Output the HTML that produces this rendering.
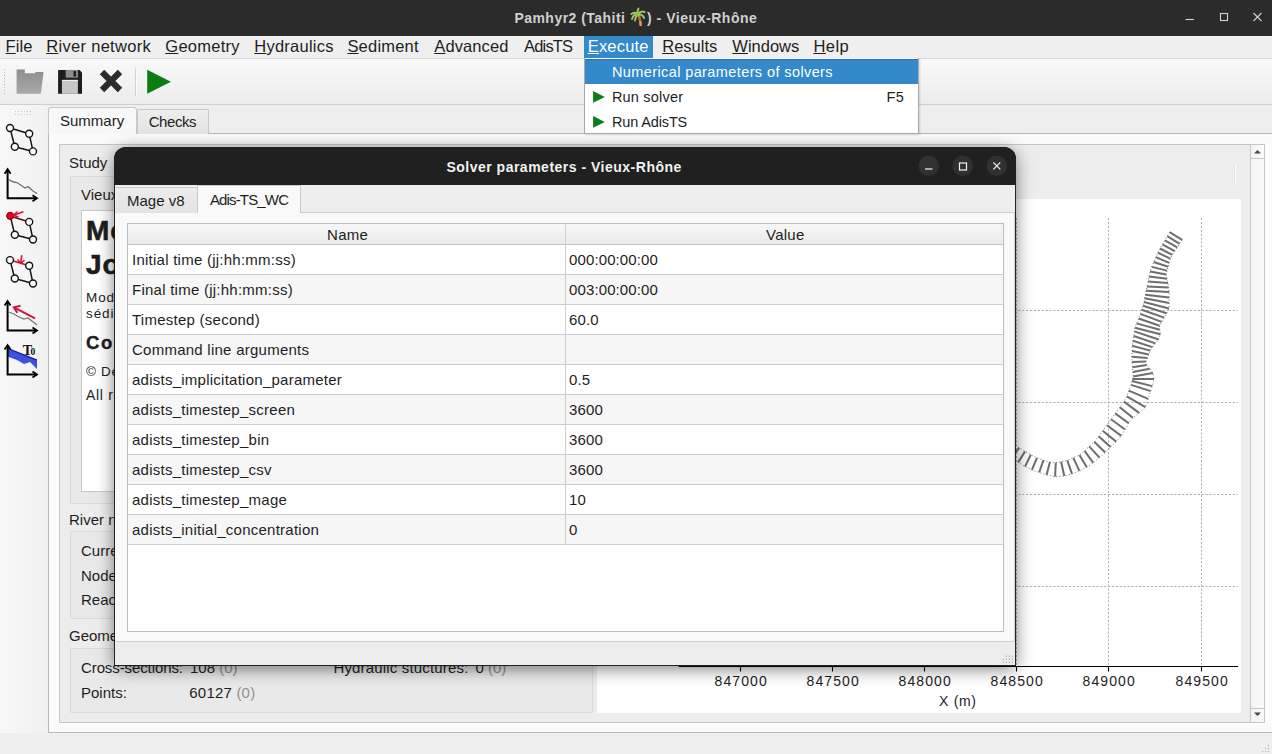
<!DOCTYPE html>
<html><head><meta charset="utf-8">
<style>
*{box-sizing:border-box;margin:0;padding:0}
html,body{width:1272px;height:754px;overflow:hidden;background:#efefef;font-family:"Liberation Sans",sans-serif;color:#1e1e1e}
.a{position:absolute}
.t{position:absolute;white-space:nowrap;font-size:15px;line-height:18px}
.ul{text-decoration:underline;text-underline-offset:1.2px}
svg{position:absolute;overflow:visible}
</style></head>
<body>
<!-- ===== MAIN TITLE BAR ===== -->
<div class="a" style="left:0;top:0;width:1272px;height:35.6px;background:#2b2b2b"></div>
<div class="t" style="left:514.4px;top:8.5px;font-size:14px;font-weight:bold;color:#d0d0d0;letter-spacing:0.47px">Pamhyr2 (Tahiti</div>
<div class="t" style="left:647px;top:8.5px;font-size:14px;font-weight:bold;color:#d0d0d0;letter-spacing:0.53px">) - Vieux-Rhône</div>
<svg style="left:628px;top:6px" width="20" height="22"><path d="M10.8 9.5 Q12.3 14 12.6 19" stroke="#b07035" stroke-width="2.6" fill="none" stroke-linecap="round"/><path d="M12.4 16 Q12.6 17.5 12.6 19" stroke="#e0a070" stroke-width="2" fill="none" stroke-linecap="round"/><g stroke="#a2c46c" stroke-width="2" fill="none" stroke-linecap="round"><path d="M9.8 8 Q6 5.5 3.5 8"/><path d="M9.8 8 Q5.5 8 4 13"/><path d="M9.8 8 Q7.5 10 7 14.5"/><path d="M9.8 8 Q13 4.5 16.5 6"/><path d="M9.8 8 Q14.5 8 16 12"/><path d="M9.8 8 Q9 4.5 10.5 2.5"/></g><circle cx="10" cy="8.5" r="2.2" fill="#8cc640"/></svg>
<svg style="left:0;top:0" width="1272" height="35">
  <g stroke="#d4d4d4" stroke-width="1.1" fill="none">
    <line x1="1185.5" y1="19.5" x2="1194" y2="19.5"/>
    <rect x="1220.5" y="13.5" width="7" height="7"/>
    <line x1="1253.5" y1="13" x2="1261.5" y2="21"/><line x1="1261.5" y1="13" x2="1253.5" y2="21"/>
  </g>
</svg>

<!-- ===== MENU BAR ===== -->
<div class="a" style="left:0;top:35.6px;width:1272px;height:23.4px;background:linear-gradient(#f6f6f6 0,#efefef 2px);border-bottom:1px solid #d9d9d9"></div>
<div class="a" style="left:584px;top:36px;width:69px;height:22.5px;background:#3389c9"></div>

<!-- menubar text -->
<div class="t" style="left:5.6px;top:37px;font-size:16.5px;letter-spacing:0.07px;color:#1e1e1e"><span class="ul">F</span>ile</div>
<div class="t" style="left:46.2px;top:37px;font-size:16.5px;letter-spacing:0.31px;color:#1e1e1e"><span class="ul">R</span>iver network</div>
<div class="t" style="left:165.3px;top:37px;font-size:16.5px;letter-spacing:0.26px;color:#1e1e1e"><span class="ul">G</span>eometry</div>
<div class="t" style="left:254.3px;top:37px;font-size:16.5px;letter-spacing:0.23px;color:#1e1e1e"><span class="ul">H</span>ydraulics</div>
<div class="t" style="left:347.4px;top:37px;font-size:16.5px;letter-spacing:0.21px;color:#1e1e1e"><span class="ul">S</span>ediment</div>
<div class="t" style="left:434.3px;top:37px;font-size:16.5px;letter-spacing:0.09px;color:#1e1e1e"><span class="ul">A</span>dvanced</div>
<div class="t" style="left:524.0px;top:37px;font-size:16.5px;letter-spacing:-0.82px;color:#1e1e1e">AdisTS</div>
<div class="t" style="left:587.7px;top:37px;font-size:16.5px;letter-spacing:0.2px;color:#ffffff"><span class="ul">E</span>xecute</div>
<div class="t" style="left:662.2px;top:37px;font-size:16.5px;letter-spacing:0.02px;color:#1e1e1e"><span class="ul">R</span>esults</div>
<div class="t" style="left:732.3px;top:37px;font-size:16.5px;letter-spacing:0.0px;color:#1e1e1e"><span class="ul">W</span>indows</div>
<div class="t" style="left:813.4px;top:37px;font-size:16.5px;letter-spacing:0.45px;color:#1e1e1e"><span class="ul">H</span>elp</div>
<!-- ===== TOOLBAR ===== -->
<div class="a" style="left:0;top:59px;width:1272px;height:45.5px;background:linear-gradient(#f9f9f9,#ececec);border-bottom:1px solid #cfcfcf"></div>

<!-- toolbar icons -->
<div class="a" style="left:3px;top:68px;width:3px;height:28px;background-image:radial-gradient(circle,#b8b8b8 0.6px,transparent 0.9px);background-size:3px 3px"></div>
<svg style="left:0;top:59px" width="200" height="46">
 <defs><linearGradient id="fg" x1="0" y1="0" x2="0" y2="1"><stop offset="0" stop-color="#8e8e8e"/><stop offset="1" stop-color="#a9a9a9"/></linearGradient></defs>
 <path d="M16.6 10.5 H24.8 V14.3 H35 L35.5 13 H43.6 L40.8 34.8 H16.6 Z" fill="url(#fg)"/>
 <path d="M58.1 10.9 H79.5 L82 13.5 V34.8 H58.1 Z" fill="#1d1d1d"/>
 <rect x="65.7" y="10.9" width="12.2" height="7.8" fill="#8c8c8c"/>
 <rect x="73.5" y="12.1" width="2.5" height="5.4" fill="#1d1d1d"/>
 <rect x="61.9" y="20.9" width="16" height="13.9" fill="#c6c6c6"/>
 <rect x="61.9" y="20.9" width="16" height="1" fill="#f4f4f4"/>
 <path d="M102 13 L120 31 M120 13 L102 31" stroke="#2b2b2b" stroke-width="6.2" stroke-linecap="butt"/>
 <rect x="135" y="9.4" width="1" height="27.6" fill="#d2d2d2"/>
 <rect x="136" y="9.4" width="1" height="27.6" fill="#fbfbfb"/>
 <path d="M147.2 10.8 L170.9 22.8 L147.2 34.8 Z" fill="#0b7d12"/>
</svg>
<!-- ===== LEFT TOOLBAR ===== -->
<div class="a" style="left:0;top:105px;width:47px;height:628px;background:linear-gradient(90deg,#f8f8f8,#f1f1f1)"></div>

<svg style="left:0;top:0" width="48" height="400"><rect x="15" y="111" width="16" height="4" fill="url(#dots)"/><defs><pattern id="dots" width="3" height="3" patternUnits="userSpaceOnUse"><rect x="0" y="0" width="1" height="1" fill="#c4c4c4"/></pattern></defs><line x1="10" y1="128" x2="29.2" y2="133.8" stroke="#151515" stroke-width="1.5"/><line x1="10" y1="128" x2="14.8" y2="146.7" stroke="#151515" stroke-width="1.5"/><line x1="29.2" y1="133.8" x2="33" y2="151.4" stroke="#151515" stroke-width="1.5"/><line x1="14.8" y1="146.7" x2="33" y2="151.4" stroke="#151515" stroke-width="1.5"/><circle cx="10" cy="128" r="3.5" fill="#fafafa" stroke="#151515" stroke-width="1.4"/><circle cx="29.2" cy="133.8" r="3.5" fill="#fafafa" stroke="#151515" stroke-width="1.4"/><circle cx="14.8" cy="146.7" r="3.5" fill="#fafafa" stroke="#151515" stroke-width="1.4"/><circle cx="33" cy="151.4" r="3.5" fill="#fafafa" stroke="#151515" stroke-width="1.4"/><path d="M7.6 170.2 V198.2 H36" stroke="#000" stroke-width="2" fill="none"/><path d="M4.6 173.7 L7.6 169.2 L10.6 173.7" stroke="#000" stroke-width="1.8" fill="none"/><path d="M32.5 195.2 L37 198.2 L32.5 201.2" stroke="#000" stroke-width="1.8" fill="none"/><path d="M8 179.2 L13.5 182 L17 182.5 L22 186 L25 188 L28 186.5 L33 191 L37 193.5" stroke="#707070" stroke-width="1.3" fill="none"/><line x1="10.2" y1="215.9" x2="29.2" y2="221.9" stroke="#5a1010" stroke-width="1.6"/><line x1="10.2" y1="215.9" x2="14.8" y2="234.8" stroke="#151515" stroke-width="1.5"/><line x1="29.2" y1="221.9" x2="33" y2="239.5" stroke="#151515" stroke-width="1.5"/><line x1="14.8" y1="234.8" x2="33" y2="239.5" stroke="#151515" stroke-width="1.5"/><circle cx="10.2" cy="215.9" r="3.6" fill="#e0001a" stroke="#8a0010" stroke-width="1"/><circle cx="29.2" cy="221.9" r="3.5" fill="#fafafa" stroke="#151515" stroke-width="1.4"/><circle cx="14.8" cy="234.8" r="3.5" fill="#fafafa" stroke="#151515" stroke-width="1.4"/><circle cx="33" cy="239.5" r="3.5" fill="#fafafa" stroke="#151515" stroke-width="1.4"/><path d="M23.4 211.7 L14 215" stroke="#e0103a" stroke-width="1.6"/><path d="M17.5 211.5 L13.5 215.2 L18.5 217" stroke="#e0103a" stroke-width="1.5" fill="none"/><line x1="10" y1="260.1" x2="29.2" y2="265.7" stroke="#c0102a" stroke-width="1.6"/><line x1="10" y1="260.1" x2="14.8" y2="278.5" stroke="#151515" stroke-width="1.5"/><line x1="29.2" y1="265.7" x2="33" y2="283.5" stroke="#151515" stroke-width="1.5"/><line x1="14.8" y1="278.5" x2="33" y2="283.5" stroke="#151515" stroke-width="1.5"/><circle cx="10" cy="260.1" r="3.5" fill="#fafafa" stroke="#151515" stroke-width="1.4"/><circle cx="29.2" cy="265.7" r="3.5" fill="#fafafa" stroke="#151515" stroke-width="1.4"/><circle cx="14.8" cy="278.5" r="3.5" fill="#fafafa" stroke="#151515" stroke-width="1.4"/><circle cx="33" cy="283.5" r="3.5" fill="#fafafa" stroke="#151515" stroke-width="1.4"/><path d="M21.7 255.1 L20.8 262.9" stroke="#e0103a" stroke-width="1.6"/><path d="M17.5 259.5 L20.8 263.2 L24.5 260" stroke="#e0103a" stroke-width="1.5" fill="none"/><path d="M7.6 302.1 V330.6 H36" stroke="#000" stroke-width="2" fill="none"/><path d="M4.6 305.6 L7.6 301.1 L10.6 305.6" stroke="#000" stroke-width="1.8" fill="none"/><path d="M32.5 327.6 L37 330.6 L32.5 333.6" stroke="#000" stroke-width="1.8" fill="none"/><path d="M8 311.7 L14 314 L18 316.5 L24 319 L28 318 L37 325" stroke="#777" stroke-width="1.2" fill="none"/><path d="M35 318.4 L14.5 307.6" stroke="#c8163e" stroke-width="2"/><path d="M20.5 305.8 L13.8 307.3 L17.3 312.8" stroke="#c8163e" stroke-width="2" fill="none"/><path d="M8 348.5 L37 360.1 L37 369 L30 362 L24 364 L17 360 L8 356.8Z" fill="#3a52de"/><path d="M8 348.5 L37 360.1" stroke="#1c1c90" stroke-width="1.3"/><path d="M7.6 346.1 V374.6 H36" stroke="#000" stroke-width="2" fill="none"/><path d="M4.6 349.6 L7.6 345.1 L10.6 349.6" stroke="#000" stroke-width="1.8" fill="none"/><path d="M32.5 371.6 L37 374.6 L32.5 377.6" stroke="#000" stroke-width="1.8" fill="none"/><text x="22.8" y="355" font-family="Liberation Serif" font-weight="bold" font-size="14" fill="#111">T</text><text x="30.6" y="355" font-family="Liberation Serif" font-weight="bold" font-size="9.5" fill="#111">0</text></svg>
<!-- ===== TAB WIDGET ===== -->
<div class="a" style="left:47.5px;top:133px;width:1230px;height:599.5px;background:#fbfbfb;border:1px solid #b9b9b9"></div>
<div class="a" style="left:137px;top:108.5px;width:72px;height:25px;background:linear-gradient(#ededed,#e4e4e4);border:1px solid #c9c9c9;border-bottom:none;border-radius:2px 2px 0 0"></div>
<div class="a" style="left:48px;top:106.5px;width:89px;height:27.5px;background:#f8f8f8;border:1px solid #c9c9c9;border-bottom:none;border-radius:3px 3px 0 0"></div>
<div class="t" style="left:60px;top:112px">Summary</div>
<div class="t" style="left:148.7px;top:112.7px;letter-spacing:-0.44px">Checks</div>

<!-- scroll area frame -->
<div class="a" style="left:59px;top:144px;width:1206px;height:579px;background:#ededed;border:1px solid #c6c6c6"></div>

<!-- Study group -->
<div class="t" style="left:69px;top:154px">Study</div>
<div class="a" style="left:70px;top:176px;width:523px;height:328px;background:#e9e9e9;border:1px solid #d9d9d9;border-radius:2px"></div>
<div class="t" style="left:81px;top:186px">Vieux-Rhône</div>
<div class="a" style="left:81px;top:209.5px;width:500px;height:282px;background:#fff;border:1px solid #c8c8c8"></div>
<div class="t" style="left:86px;top:215.3px;font-size:28px;line-height:32px;font-weight:bold;letter-spacing:1px;-webkit-text-stroke:0.6px #1e1e1e">Modèle</div>
<div class="t" style="left:86px;top:248.8px;font-size:28px;line-height:32px;font-weight:bold;letter-spacing:1px;-webkit-text-stroke:0.6px #1e1e1e">Jonage</div>
<div class="t" style="left:86px;top:290px;font-size:13.5px;line-height:16px;letter-spacing:0.9px">Modèle de</div>
<div class="t" style="left:86px;top:306px;font-size:13.5px;line-height:16px;letter-spacing:0.9px">sédiments</div>
<div class="t" style="left:86px;top:332.5px;font-size:18.5px;line-height:20px;font-weight:bold;letter-spacing:1.6px;-webkit-text-stroke:0.4px #1e1e1e">Copyright</div>
<div class="t" style="left:86px;top:363.5px;font-size:13.5px;line-height:16px;letter-spacing:0.7px">© Dev</div>
<div class="t" style="left:86px;top:387px;font-size:14px;line-height:16px;letter-spacing:0.7px">All rights</div>

<!-- River network group -->
<div class="t" style="left:69px;top:511px">River network</div>
<div class="a" style="left:70px;top:531px;width:523px;height:88px;background:#e9e9e9;border:1px solid #d9d9d9;border-radius:2px"></div>
<div class="t" style="left:81px;top:542px">Current reach:</div>
<div class="t" style="left:81px;top:567px">Nodes:</div>
<div class="t" style="left:81px;top:591px">Reaches:</div>

<!-- Geometry group -->
<div class="t" style="left:69px;top:626.8px">Geometry</div>
<div class="a" style="left:70px;top:647.5px;width:523px;height:65px;background:#e9e9e9;border:1px solid #d9d9d9;border-radius:2px"></div>
<div class="t" style="left:81px;top:659.3px;letter-spacing:-0.1px">Cross-sections:</div>
<div class="t" style="left:190px;top:659.3px">108 <span style="color:#8f8f8f">(0)</span></div>
<div class="t" style="left:333.4px;top:659.3px;letter-spacing:0.17px">Hydraulic stuctures:</div>
<div class="t" style="left:475.5px;top:659.3px">0 <span style="color:#8f8f8f">(0)</span></div>
<div class="t" style="left:81px;top:684px">Points:</div>
<div class="t" style="left:189.3px;top:684px;letter-spacing:0.2px">60127 <span style="color:#8f8f8f">(0)</span></div>

<!-- plot toolbar area + plot -->
<div class="a" style="left:1233.5px;top:163px;width:1px;height:21px;background:#e2e2e2"></div><div class="a" style="left:1234.5px;top:163px;width:1px;height:21px;background:#fcfcfc"></div>
<div class="a" style="left:597px;top:198.5px;width:644px;height:514px;background:#fff"></div>

<!-- scrollbar -->
<div class="a" style="left:1250px;top:144px;width:15px;height:579px;background:linear-gradient(90deg,#f4f4f4,#fafafa);border:1px solid #c6c6c6"></div>
<div class="a" style="left:1250px;top:144px;width:15px;height:15px;border:1px solid #c6c6c6"></div>
<div class="a" style="left:1250px;top:708px;width:15px;height:15px;border:1px solid #c6c6c6"></div>
<svg style="left:1250px;top:144px" width="15" height="579"><path d="M4 9.5 L7.5 6 L11 9.5Z" fill="#454545"/><path d="M4 568.5 L7.5 572 L11 568.5Z" fill="#454545"/></svg>

<svg style="left:0;top:0" width="1" height="1"><g fill="#b4b4b4"><rect x="1267.9" y="744.9" width="1.2" height="1.2"/><rect x="1264.9" y="747.9" width="1.2" height="1.2"/><rect x="1267.9" y="747.9" width="1.2" height="1.2"/><rect x="1261.9" y="750.9" width="1.2" height="1.2"/><rect x="1264.9" y="750.9" width="1.2" height="1.2"/><rect x="1267.9" y="750.9" width="1.2" height="1.2"/></g></svg>
<!--PLOTSTART-->
<svg style="left:0;top:0" width="1272" height="754">
<g stroke="#b0b0b0" stroke-width="1" stroke-dasharray="2.2 1.7" fill="none">
<line x1="740.5" y1="218" x2="740.5" y2="666"/>
<line x1="832.5" y1="218" x2="832.5" y2="666"/>
<line x1="924.5" y1="218" x2="924.5" y2="666"/>
<line x1="1016.5" y1="218" x2="1016.5" y2="666"/>
<line x1="1108.5" y1="218" x2="1108.5" y2="666"/>
<line x1="1201.5" y1="218" x2="1201.5" y2="666"/>
<line x1="679" y1="310.5" x2="1238" y2="310.5"/>
<line x1="679" y1="402.5" x2="1238" y2="402.5"/>
<line x1="679" y1="494.5" x2="1238" y2="494.5"/>
<line x1="679" y1="586.5" x2="1238" y2="586.5"/>
</g>
<line x1="678.6" y1="666.5" x2="1238" y2="666.5" stroke="#000" stroke-width="1.2"/>
<line x1="740.5" y1="666.5" x2="740.5" y2="671.5" stroke="#000" stroke-width="1.1"/>
<line x1="832.5" y1="666.5" x2="832.5" y2="671.5" stroke="#000" stroke-width="1.1"/>
<line x1="924.5" y1="666.5" x2="924.5" y2="671.5" stroke="#000" stroke-width="1.1"/>
<line x1="1016.5" y1="666.5" x2="1016.5" y2="671.5" stroke="#000" stroke-width="1.1"/>
<line x1="1108.5" y1="666.5" x2="1108.5" y2="671.5" stroke="#000" stroke-width="1.1"/>
<line x1="1201.5" y1="666.5" x2="1201.5" y2="671.5" stroke="#000" stroke-width="1.1"/>
</svg>
<svg style="left:0;top:0" width="1272" height="754">
<polyline points="1169.6,232.1 1167.3,236.1 1164.9,240.3 1162.4,244.4 1160.0,248.5 1157.8,252.7 1155.8,257.2 1153.7,262.0 1151.7,266.9 1150.0,271.6 1149.0,276.6 1148.0,281.6 1147.0,286.4 1146.1,290.8 1145.3,294.7 1144.6,298.3 1144.0,302.0 1143.0,305.7 1141.7,309.7 1140.3,313.9 1138.6,318.5 1136.6,323.4 1134.9,327.8 1134.3,331.4 1133.7,336.0 1132.9,340.7 1132.2,345.7 1132.0,351.1 1131.8,356.7 1131.9,362.0 1132.4,367.3 1132.9,372.1 1133.2,376.4 1132.4,379.1 1131.9,381.0 1131.1,384.9 1128.8,390.7 1126.8,396.4 1123.9,401.6 1119.8,407.2 1115.2,413.4 1111.0,419.3 1107.0,425.2 1102.7,430.7 1098.6,436.2 1094.3,441.8 1089.2,446.3 1084.6,450.8 1079.4,455.0 1073.3,457.8 1067.3,460.3 1061.1,461.8 1055.8,462.5 1049.9,462.1 1043.5,460.1 1036.9,457.9 1030.8,454.7 1025.0,451.4 1019.1,447.7 1013.6,443.2 1008.1,438.6" fill="none" stroke="#777" stroke-width="1" stroke-dasharray="1 2.2"/>
<polyline points="1182.2,239.9 1179.6,243.8 1177.2,247.4 1174.7,251.2 1172.3,254.8 1170.4,258.7 1169.2,262.8 1168.2,266.7 1167.0,270.6 1166.3,274.6 1167.1,278.8 1167.9,283.0 1168.7,287.4 1169.1,292.1 1169.2,297.4 1169.1,303.0 1168.9,308.5 1166.6,313.3 1164.2,317.6 1161.7,321.9 1159.6,325.7 1159.8,329.7 1160.4,334.3 1158.6,339.5 1155.4,343.4 1152.5,347.1 1150.1,350.6 1148.8,354.5 1147.5,357.9 1146.0,361.5 1146.7,365.1 1149.7,368.7 1152.9,372.9 1154.0,379.0 1152.3,386.1 1150.7,391.1 1148.2,398.9 1145.3,407.1 1139.1,412.9 1132.9,417.8 1128.7,423.3 1125.1,429.5 1121.3,435.9 1116.2,441.6 1110.6,447.1 1105.2,452.5 1099.5,457.7 1093.2,462.8 1086.8,467.3 1079.4,470.8 1072.0,473.9 1064.3,476.0 1055.1,476.6 1046.6,474.9 1039.2,472.4 1031.9,469.9 1025.0,466.6 1018.2,462.4 1011.7,458.4 1005.7,453.9 999.7,449.4" fill="none" stroke="#777" stroke-width="1" stroke-dasharray="1 2.2"/>
<g stroke="#6e6e6e" stroke-width="2" stroke-linecap="butt">
<line x1="1169.6" y1="232.1" x2="1182.2" y2="239.9"/>
<line x1="1167.3" y1="236.1" x2="1179.6" y2="243.8"/>
<line x1="1164.9" y1="240.3" x2="1177.2" y2="247.4"/>
<line x1="1162.4" y1="244.4" x2="1174.7" y2="251.2"/>
<line x1="1160.0" y1="248.5" x2="1172.3" y2="254.8"/>
<line x1="1157.8" y1="252.7" x2="1170.4" y2="258.7"/>
<line x1="1155.8" y1="257.2" x2="1169.2" y2="262.8"/>
<line x1="1153.7" y1="262.0" x2="1168.2" y2="266.7"/>
<line x1="1151.7" y1="266.9" x2="1167.0" y2="270.6"/>
<line x1="1150.0" y1="271.6" x2="1166.3" y2="274.6"/>
<line x1="1149.0" y1="276.6" x2="1167.1" y2="278.8"/>
<line x1="1148.0" y1="281.6" x2="1167.9" y2="283.0"/>
<line x1="1147.0" y1="286.4" x2="1168.7" y2="287.4"/>
<line x1="1146.1" y1="290.8" x2="1169.1" y2="292.1"/>
<line x1="1145.3" y1="294.7" x2="1169.2" y2="297.4"/>
<line x1="1144.6" y1="298.3" x2="1169.1" y2="303.0"/>
<line x1="1144.0" y1="302.0" x2="1168.9" y2="308.5"/>
<line x1="1143.0" y1="305.7" x2="1166.6" y2="313.3"/>
<line x1="1141.7" y1="309.7" x2="1164.2" y2="317.6"/>
<line x1="1140.3" y1="313.9" x2="1161.7" y2="321.9"/>
<line x1="1138.6" y1="318.5" x2="1159.6" y2="325.7"/>
<line x1="1136.6" y1="323.4" x2="1159.8" y2="329.7"/>
<line x1="1134.9" y1="327.8" x2="1160.4" y2="334.3"/>
<line x1="1134.3" y1="331.4" x2="1158.6" y2="339.5"/>
<line x1="1133.7" y1="336.0" x2="1155.4" y2="343.4"/>
<line x1="1132.9" y1="340.7" x2="1152.5" y2="347.1"/>
<line x1="1132.2" y1="345.7" x2="1150.1" y2="350.6"/>
<line x1="1132.0" y1="351.1" x2="1148.8" y2="354.5"/>
<line x1="1131.8" y1="356.7" x2="1147.5" y2="357.9"/>
<line x1="1131.9" y1="362.0" x2="1146.0" y2="361.5"/>
<line x1="1132.4" y1="367.3" x2="1146.7" y2="365.1"/>
<line x1="1132.9" y1="372.1" x2="1149.7" y2="368.7"/>
<line x1="1133.2" y1="376.4" x2="1152.9" y2="372.9"/>
<line x1="1132.4" y1="379.1" x2="1154.0" y2="379.0"/>
<line x1="1131.9" y1="381.0" x2="1152.3" y2="386.1"/>
<line x1="1131.1" y1="384.9" x2="1150.7" y2="391.1"/>
<line x1="1128.8" y1="390.7" x2="1148.2" y2="398.9"/>
<line x1="1126.8" y1="396.4" x2="1145.3" y2="407.1"/>
<line x1="1123.9" y1="401.6" x2="1139.1" y2="412.9"/>
<line x1="1119.8" y1="407.2" x2="1132.9" y2="417.8"/>
<line x1="1115.2" y1="413.4" x2="1128.7" y2="423.3"/>
<line x1="1111.0" y1="419.3" x2="1125.1" y2="429.5"/>
<line x1="1107.0" y1="425.2" x2="1121.3" y2="435.9"/>
<line x1="1102.7" y1="430.7" x2="1116.2" y2="441.6"/>
<line x1="1098.6" y1="436.2" x2="1110.6" y2="447.1"/>
<line x1="1094.3" y1="441.8" x2="1105.2" y2="452.5"/>
<line x1="1089.2" y1="446.3" x2="1099.5" y2="457.7"/>
<line x1="1084.6" y1="450.8" x2="1093.2" y2="462.8"/>
<line x1="1079.4" y1="455.0" x2="1086.8" y2="467.3"/>
<line x1="1073.3" y1="457.8" x2="1079.4" y2="470.8"/>
<line x1="1067.3" y1="460.3" x2="1072.0" y2="473.9"/>
<line x1="1061.1" y1="461.8" x2="1064.3" y2="476.0"/>
<line x1="1055.8" y1="462.5" x2="1055.1" y2="476.6"/>
<line x1="1049.9" y1="462.1" x2="1046.6" y2="474.9"/>
<line x1="1043.5" y1="460.1" x2="1039.2" y2="472.4"/>
<line x1="1036.9" y1="457.9" x2="1031.9" y2="469.9"/>
<line x1="1030.8" y1="454.7" x2="1025.0" y2="466.6"/>
<line x1="1025.0" y1="451.4" x2="1018.2" y2="462.4"/>
<line x1="1019.1" y1="447.7" x2="1011.7" y2="458.4"/>
<line x1="1013.6" y1="443.2" x2="1005.7" y2="453.9"/>
<line x1="1008.1" y1="438.6" x2="999.7" y2="449.4"/>
</g></svg>
<div class="t" style="left:714.5px;top:671.8px;font-size:14px;letter-spacing:1.1px">847000</div>
<div class="t" style="left:806.5px;top:671.8px;font-size:14px;letter-spacing:1.1px">847500</div>
<div class="t" style="left:898.5px;top:671.8px;font-size:14px;letter-spacing:1.1px">848000</div>
<div class="t" style="left:990.5px;top:671.8px;font-size:14px;letter-spacing:1.1px">848500</div>
<div class="t" style="left:1082.5px;top:671.8px;font-size:14px;letter-spacing:1.1px">849000</div>
<div class="t" style="left:1175.5px;top:671.8px;font-size:14px;letter-spacing:1.1px">849500</div>
<div class="t" style="left:939px;top:691.5px;font-size:14px;letter-spacing:0.7px">X (m)</div>
<!--PLOT-->

<!-- ===== DIALOG ===== -->
<div class="a" style="left:115px;top:148px;width:900px;height:517px;border-radius:11px 11px 0 0;box-shadow:0 0 0 1px rgba(25,25,25,0.92),0 3px 18px rgba(0,0,0,0.55);background:#eeeeee"></div>
<div class="a" style="left:114px;top:147px;width:902px;height:38px;border-radius:12px 12px 0 0;background:#202020"></div>
<div class="t" style="left:446.4px;top:158px;font-size:14px;letter-spacing:0.5px;font-weight:bold;color:#f2f2f2">Solver parameters - Vieux-Rhône</div>
<svg style="left:114px;top:147.5px" width="902" height="38"><g fill="#303030"><circle cx="814.8" cy="17.8" r="10.3"/><circle cx="848.8" cy="17.8" r="10.3"/><circle cx="882.8" cy="17.8" r="10.3"/></g><g stroke="#f4f4f4" stroke-width="1.2" fill="none"><line x1="811" y1="21" x2="818.5" y2="21"/><rect x="845.5" y="15" width="7" height="7"/><line x1="879.3" y1="14.3" x2="886.3" y2="21.3"/><line x1="886.3" y1="14.3" x2="879.3" y2="21.3"/></g></svg>
<div class="a" style="left:115px;top:212px;width:900px;height:429.5px;background:#f9f9f9;border:1px solid #cfcfcf;border-left:none"></div>
<div class="a" style="left:115.5px;top:187px;width:82px;height:25.5px;background:linear-gradient(#ececec,#e3e3e3);border:1px solid #c9c9c9;border-bottom:none;border-left:none"></div>
<div class="a" style="left:197px;top:185px;width:104px;height:28px;background:#f9f9f9;border:1px solid #c9c9c9;border-bottom:none"></div>
<div class="t" style="left:127px;top:192px">Mage v8</div>
<div class="t" style="left:209.9px;top:190.8px;letter-spacing:-0.84px">Adis-TS_WC</div>
<div class="a" style="left:126.5px;top:222.5px;width:877.5px;height:409px;background:#fff;border:1px solid #bdbdbd"></div>
<div class="a" style="left:127.5px;top:223.5px;width:875.5px;height:21px;background:linear-gradient(#f7f7f7,#ebebeb);border-bottom:1px solid #c4c4c4"></div>
<div class="a" style="left:565px;top:223.5px;width:1px;height:21px;background:#cfcfcf"></div>
<div class="t" style="left:327px;top:226px;letter-spacing:0.3px">Name</div>
<div class="t" style="left:766px;top:226px;letter-spacing:0.25px">Value</div>
<div class="a" style="left:127.5px;top:244.5px;width:875.5px;height:30px;background:#ffffff;border-bottom:1px solid #cccccc"></div>
<div class="a" style="left:565px;top:244.5px;width:1px;height:30px;background:#cccccc"></div>
<div class="t" style="left:132px;top:251.0px;letter-spacing:0.25px">Initial time (jj:hh:mm:ss)</div>
<div class="t" style="left:569.1px;top:251.0px;letter-spacing:0.1px">000:00:00:00</div>
<div class="a" style="left:127.5px;top:274.5px;width:875.5px;height:30px;background:#f6f6f6;border-bottom:1px solid #cccccc"></div>
<div class="a" style="left:565px;top:274.5px;width:1px;height:30px;background:#cccccc"></div>
<div class="t" style="left:132px;top:281.0px;letter-spacing:0.25px">Final time (jj:hh:mm:ss)</div>
<div class="t" style="left:569.1px;top:281.0px;letter-spacing:0.1px">003:00:00:00</div>
<div class="a" style="left:127.5px;top:304.5px;width:875.5px;height:30px;background:#ffffff;border-bottom:1px solid #cccccc"></div>
<div class="a" style="left:565px;top:304.5px;width:1px;height:30px;background:#cccccc"></div>
<div class="t" style="left:132px;top:311.0px;letter-spacing:0.25px">Timestep (second)</div>
<div class="t" style="left:569.1px;top:311.0px;letter-spacing:0.1px">60.0</div>
<div class="a" style="left:127.5px;top:334.5px;width:875.5px;height:30px;background:#f6f6f6;border-bottom:1px solid #cccccc"></div>
<div class="a" style="left:565px;top:334.5px;width:1px;height:30px;background:#cccccc"></div>
<div class="t" style="left:132px;top:341.0px;letter-spacing:0.25px">Command line arguments</div>
<div class="a" style="left:127.5px;top:364.5px;width:875.5px;height:30px;background:#ffffff;border-bottom:1px solid #cccccc"></div>
<div class="a" style="left:565px;top:364.5px;width:1px;height:30px;background:#cccccc"></div>
<div class="t" style="left:132px;top:371.0px;letter-spacing:0.25px">adists_implicitation_parameter</div>
<div class="t" style="left:569.1px;top:371.0px;letter-spacing:0.1px">0.5</div>
<div class="a" style="left:127.5px;top:394.5px;width:875.5px;height:30px;background:#f6f6f6;border-bottom:1px solid #cccccc"></div>
<div class="a" style="left:565px;top:394.5px;width:1px;height:30px;background:#cccccc"></div>
<div class="t" style="left:132px;top:401.0px;letter-spacing:0.25px">adists_timestep_screen</div>
<div class="t" style="left:569.1px;top:401.0px;letter-spacing:0.1px">3600</div>
<div class="a" style="left:127.5px;top:424.5px;width:875.5px;height:30px;background:#ffffff;border-bottom:1px solid #cccccc"></div>
<div class="a" style="left:565px;top:424.5px;width:1px;height:30px;background:#cccccc"></div>
<div class="t" style="left:132px;top:431.0px;letter-spacing:0.25px">adists_timestep_bin</div>
<div class="t" style="left:569.1px;top:431.0px;letter-spacing:0.1px">3600</div>
<div class="a" style="left:127.5px;top:454.5px;width:875.5px;height:30px;background:#f6f6f6;border-bottom:1px solid #cccccc"></div>
<div class="a" style="left:565px;top:454.5px;width:1px;height:30px;background:#cccccc"></div>
<div class="t" style="left:132px;top:461.0px;letter-spacing:0.25px">adists_timestep_csv</div>
<div class="t" style="left:569.1px;top:461.0px;letter-spacing:0.1px">3600</div>
<div class="a" style="left:127.5px;top:484.5px;width:875.5px;height:30px;background:#ffffff;border-bottom:1px solid #cccccc"></div>
<div class="a" style="left:565px;top:484.5px;width:1px;height:30px;background:#cccccc"></div>
<div class="t" style="left:132px;top:491.0px;letter-spacing:0.25px">adists_timestep_mage</div>
<div class="t" style="left:569.1px;top:491.0px;letter-spacing:0.1px">10</div>
<div class="a" style="left:127.5px;top:514.5px;width:875.5px;height:30px;background:#f6f6f6;border-bottom:1px solid #cccccc"></div>
<div class="a" style="left:565px;top:514.5px;width:1px;height:30px;background:#cccccc"></div>
<div class="t" style="left:132px;top:521.0px;letter-spacing:0.25px">adists_initial_concentration</div>
<div class="t" style="left:569.1px;top:521.0px;letter-spacing:0.1px">0</div>
<div class="a" style="left:115px;top:641.5px;width:900px;height:23.5px;background:#ededed"></div>
<svg style="left:0;top:0" width="1" height="1"><g fill="#a6a6a6"><rect x="1005.6999999999999" y="655.6" width="1.2" height="1.2"/><rect x="1008.6999999999999" y="655.6" width="1.2" height="1.2"/><rect x="1011.6999999999999" y="655.6" width="1.2" height="1.2"/><rect x="1002.6999999999999" y="658.6999999999999" width="1.2" height="1.2"/><rect x="1005.6999999999999" y="658.6999999999999" width="1.2" height="1.2"/><rect x="1008.6999999999999" y="658.6999999999999" width="1.2" height="1.2"/><rect x="1011.6999999999999" y="658.6999999999999" width="1.2" height="1.2"/><rect x="1002.6999999999999" y="661.6999999999999" width="1.2" height="1.2"/><rect x="1005.6999999999999" y="661.6999999999999" width="1.2" height="1.2"/><rect x="1008.6999999999999" y="661.6999999999999" width="1.2" height="1.2"/><rect x="1011.6999999999999" y="661.6999999999999" width="1.2" height="1.2"/></g></svg>
<!--DIALOG-->

<!-- ===== DROPDOWN MENU ===== -->
<div class="a" style="left:584px;top:58px;width:335px;height:75.5px;background:#ffffff;border:1px solid #a8a8a8;border-top:none;box-shadow:1px 1px 2px rgba(0,0,0,0.15)"></div>
<div class="a" style="left:585px;top:58.5px;width:333px;height:25px;background:#3389c9;border-top:1px solid #2a72b0"></div>
<div class="t" style="left:611.9px;top:62.8px;font-size:14.5px;letter-spacing:0.4px;color:#ffffff">Numerical parameters of solvers</div>
<svg style="left:0;top:0" width="1" height="1"><path d="M593.1 91.1 L604.8 97 L593.1 102.8Z M593.1 116 L604.8 121.9 L593.1 127.8Z" fill="#0f7d17"/></svg>
<div class="t" style="left:611.9px;top:87.6px;font-size:14.5px;letter-spacing:0.2px">Run solver</div>
<div class="t" style="left:611.9px;top:113.2px;font-size:14.5px;letter-spacing:-0.13px">Run AdisTS</div>
<div class="t" style="left:886.6px;top:87.7px;font-size:14.5px;letter-spacing:0.4px">F5</div>
<!--MENU-->
</body></html>
